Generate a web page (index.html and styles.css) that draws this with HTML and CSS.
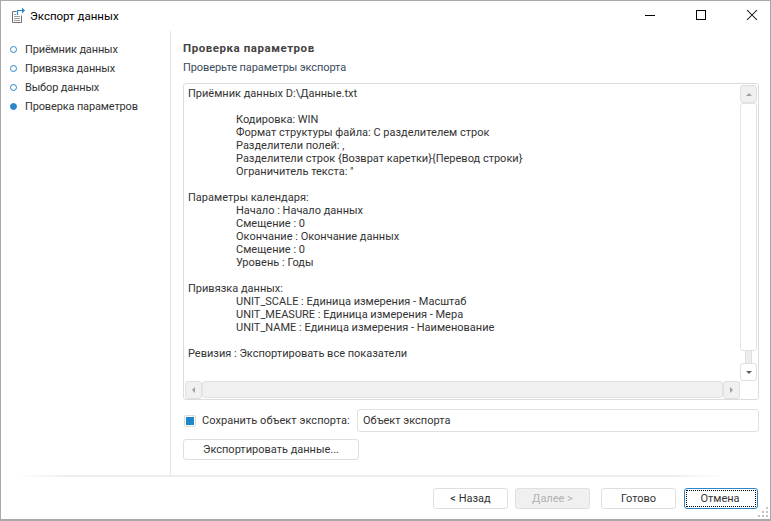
FILE: index.html
```html
<!DOCTYPE html>
<html lang="ru">
<head>
<meta charset="utf-8">
<title>Экспорт данных</title>
<link rel="stylesheet" href="styles.css">
</head>
<body>
<div class="window">
  <header class="titlebar">
    <svg class="app-icon" width="18" height="18" viewBox="0 0 18 18" fill="none">
      <path d="M5.5 4.5H1.5v11h9V8.5" stroke="#707070"/>
      <path d="M3 7.5h2M3 9.5h6M3 11.5h6M3 13.5h6" stroke="#a0a0a0"/>
      <path d="M6.5 8V3.5h5" stroke="#2a86c8" stroke-width="1.2"/>
      <path d="M11 0.5l3 3-3 3z" fill="#2a86c8"/>
    </svg>
    <span class="title">Экспорт данных</span>
    <div class="win-controls">
      <svg width="12" height="12" viewBox="0 0 12 12"><path d="M1 6.5h10" stroke="#000"/></svg>
      <svg width="12" height="12" viewBox="0 0 12 12" fill="none"><rect x="1.5" y="1.5" width="9" height="9" stroke="#000"/></svg>
      <svg width="12" height="12" viewBox="0 0 12 12"><path d="M1 1l10 10M11 1L1 11" stroke="#000" stroke-width="1.05"/></svg>
    </div>
  </header>
  <div class="content">
    <nav class="steps">
      <div class="step"><i class="dot"></i>Приёмник данных</div>
      <div class="step"><i class="dot"></i>Привязка данных</div>
      <div class="step"><i class="dot"></i>Выбор данных</div>
      <div class="step"><i class="dot active"></i>Проверка параметров</div>
    </nav>
    <main class="main">
      <h1 class="heading">Проверка параметров</h1>
      <p class="sub">Проверьте параметры экспорта</p>
      <div class="textbox">
        <div class="grid">
          <div class="text">
            <div class="line">Приёмник данных D:\Данные.txt</div>
            <div class="line"></div>
            <div class="line in">Кодировка: WIN</div>
            <div class="line in">Формат структуры файла: С разделителем строк</div>
            <div class="line in">Разделители полей: ,</div>
            <div class="line in">Разделители строк {Возврат каретки}{Перевод строки}</div>
            <div class="line in">Ограничитель текста: "</div>
            <div class="line"></div>
            <div class="line">Параметры календаря:</div>
            <div class="line in">Начало : Начало данных</div>
            <div class="line in">Смещение : 0</div>
            <div class="line in">Окончание : Окончание данных</div>
            <div class="line in">Смещение : 0</div>
            <div class="line in">Уровень : Годы</div>
            <div class="line"></div>
            <div class="line">Привязка данных:</div>
            <div class="line in">UNIT_SCALE : Единица измерения - Масштаб</div>
            <div class="line in">UNIT_MEASURE : Единица измерения - Мера</div>
            <div class="line in">UNIT_NAME : Единица измерения - Наименование</div>
            <div class="line"></div>
            <div class="line">Ревизия : Экспортировать все показатели</div>
          </div>
          <div class="vbar">
            <div class="sb-btn"><i class="arr up"></i></div>
            <div class="vthumb"></div>
            <div class="vtrack"><span></span></div>
            <div class="sb-btn"><i class="arr down"></i></div>
          </div>
          <div class="hbar">
            <div class="sb-btn"><i class="arr left"></i></div>
            <div class="hthumb"></div>
            <div class="sb-btn"><i class="arr right"></i></div>
          </div>
        </div>
      </div>
      <div class="save-row">
        <span class="check"><i></i></span>
        <label class="save-label">Сохранить объект экспорта:</label>
        <div class="input">Объект экспорта</div>
      </div>
      <button class="btn export">Экспортировать данные...</button>
    </main>
  </div>
  <div class="sep"></div>
  <footer class="footer">
    <button class="btn nav">&lt; Назад</button>
    <button class="btn nav disabled">Далее &gt;</button>
    <button class="btn nav ready">Готово</button>
    <button class="btn nav focused"><span>Отмена</span></button>
  </footer>
  <svg class="grip" width="12" height="12" viewBox="0 0 12 12" fill="#c4c4c4"><rect x="9" y="1" width="2" height="2"/><rect x="5" y="5" width="2" height="2"/><rect x="9" y="5" width="2" height="2"/><rect x="1" y="9" width="2" height="2"/><rect x="5" y="9" width="2" height="2"/><rect x="9" y="9" width="2" height="2"/></svg>
</div>
</body>
</html>
```
FILE: styles.css
```css
* { box-sizing: border-box; }
html, body { margin: 0; height: 100%; }
body { font: 11px/13px Roboto, "Noto Sans", sans-serif; color: #333; background: #fff; }
.window { position: relative; width: 771px; height: 521px; border: 1px solid #a9a9a9; border-width: 1px 1px 2px 1px; display: flex; flex-direction: column; background: #fff; }
.titlebar { height: 30px; display: flex; align-items: center; padding-left: 10px; flex: none; }
.app-icon { margin-right: 1px; }
.title { font-size: 11.5px; color: #000; }
.win-controls { margin-left: auto; display: flex; gap: 39px; padding-right: 12px; margin-top: -2px; }
.win-controls svg { display: block; }
.content { flex: 1; display: flex; min-height: 0; }
.steps { width: 170px; flex: none; border-right: 1px solid #e3e3e3; padding-top: 9px; }
.step { height: 19px; display: flex; align-items: center; padding-left: 9px; color: #333; letter-spacing: -0.15px; }
.dot { width: 7px; height: 7px; border-radius: 50%; border: 1px solid #2a86c8; margin-right: 8px; flex: none; }
.dot.active { background: #2a86c8; }
.main { flex: 1; min-width: 0; padding: 10px 11px 0 12px; }
.heading { margin: 0; font-size: 11.5px; font-weight: 700; line-height: 15px; color: #444; letter-spacing: 0.55px; }
.sub { margin: 4px 0 0; line-height: 15px; color: #3a4b5c; letter-spacing: -0.1px; }
.textbox { margin-top: 8px; height: 317px; border: 1px solid #dcdcdc; border-radius: 3px; padding: 1px; }
.grid { display: grid; grid-template-columns: 1fr 17px; grid-template-rows: 1fr 17px; height: 100%; }
.text { padding: 2px 3px; }
.line { height: 13.03px; line-height: 13px; white-space: pre; }
.line.in { padding-left: 48px; }
.vbar { display: flex; flex-direction: column; grid-row: 1; grid-column: 2; }
.hbar { display: flex; grid-row: 2; grid-column: 1; }
.sb-btn { width: 17px; height: 18px; border: 1px solid #e0e0e0; border-radius: 3px; flex: none; background: #fff; display: flex; align-items: center; justify-content: center; }
.vbar .sb-btn:first-child { background: #f0f0f0; }
.hbar .sb-btn { background: #f0f0f0; }
.vthumb { height: 248px; border: 1px solid #e3e3e3; border-radius: 3px; background: #fff; flex: none; }
.vtrack { flex: 1; display: flex; justify-content: center; }
.vtrack span { width: 7px; background: #ececec; border: solid #dedede; border-width: 0 1px; }
.hthumb { flex: 1; border: 1px solid #e3e3e3; border-radius: 3px; background: #f0f0f0; }
.arr { width: 0; height: 0; border: 3px solid transparent; display: block; }
.arr.up { border-bottom-color: #a0a0a0; margin-top: -3px; }
.arr.down { border-top-color: #606060; margin-top: 3px; }
.arr.left { border-right-color: #a0a0a0; margin-left: -3px; }
.arr.right { border-left-color: #a0a0a0; margin-left: 3px; }
.save-row { display: flex; align-items: center; margin-top: 9px; height: 23px; }
.check { width: 12px; height: 12px; margin-left: 1px; border: 1px solid #dcdcdc; border-radius: 2px; padding: 1px; flex: none; }
.check i { display: block; width: 8px; height: 8px; background: #1f86c9; }
.save-label { margin-left: 6px; width: 155px; color: #333; flex: none; letter-spacing: 0.05px; }
.input { flex: 1; height: 23px; border: 1px solid #e0e0e0; border-radius: 3px; padding: 0 5px; line-height: 21px; }
.btn { font: inherit; color: #333; background: #fff; border: 1px solid #dfdfdf; border-radius: 3px; padding: 0; }
.export { display: block; width: 176px; height: 21px; margin-top: 7px; }
.sep { height: 2px; flex: none; margin: 0 45px 0 14px; background: linear-gradient(to right, #fff, #ededed 8%, #ededed 92%, #fff); }
.footer { height: 42px; flex: none; display: flex; justify-content: flex-end; padding: 11px 12px 0 0; }
.nav { width: 75px; height: 21px; }
.disabled { background: #f0f0f0; color: #b0b0b0; margin-left: 7px; }
.ready { margin-left: 11px; }
.nav.focused { width: 74px; border: 1px solid #2a86c8; padding: 1px; margin-left: 8px; }
.focused span { display: block; height: 17px; line-height: 15px; border: 1px dotted #000; padding-right: 2px; }
.grip { position: absolute; right: 1px; bottom: 1px; }
```
